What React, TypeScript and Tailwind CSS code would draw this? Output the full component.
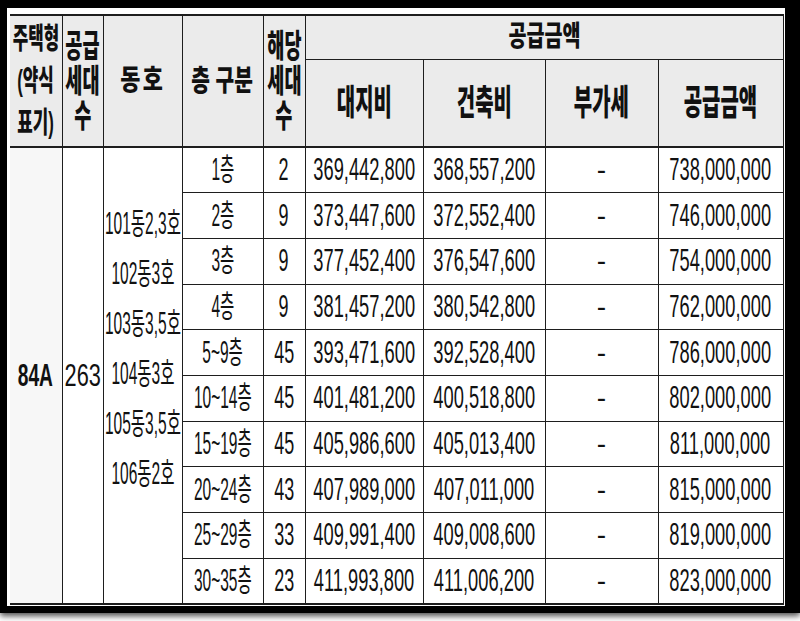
import React from "react"

const FONT = "font-['Liberation_Sans','Noto_Sans_CJK_KR',sans-serif]"

const ROWS: Array<[string, string, string, string, string]> = [
  ["1층", "2", "369,442,800", "368,557,200", "738,000,000"],
  ["2층", "9", "373,447,600", "372,552,400", "746,000,000"],
  ["3층", "9", "377,452,400", "376,547,600", "754,000,000"],
  ["4층", "9", "381,457,200", "380,542,800", "762,000,000"],
  ["5~9층", "45", "393,471,600", "392,528,400", "786,000,000"],
  ["10~14층", "45", "401,481,200", "400,518,800", "802,000,000"],
  ["15~19층", "45", "405,986,600", "405,013,400", "811,000,000"],
  ["20~24층", "43", "407,989,000", "407,011,000", "815,000,000"],
  ["25~29층", "33", "409,991,400", "409,008,600", "819,000,000"],
  ["30~35층", "23", "411,993,800", "411,006,200", "823,000,000"],
]

const DONGS = ["101동2,3호", "102동3호", "103동3,5호", "104동3호", "105동3,5호", "106동2호"]

// squeezed text, centred even when wider than the cell
function Sq({ children, className }: { children: React.ReactNode; className: string }) {
  return (
    <div className="flex justify-center">
      <span className={`inline-block whitespace-nowrap ${className}`}>{children}</span>
    </div>
  )
}

const cell = "border border-[#1e1e1e] p-0 align-middle"
const head = `${cell} bg-[#ebebeb] font-black text-[#111]`

export default function App() {
  return (
    <div className={`h-[621px] w-[800px] bg-white ${FONT}`}>
      <div className="h-[613px] bg-black pl-[7px] pt-[8px] shadow-[0_3px_6px_rgba(0,0,0,0.7)]">
        <div className="h-[598px] w-[778px] bg-white pl-[3px] pt-[6px]">
          <table className="w-[773px] table-fixed border-collapse text-[#111]">
            <colgroup>
              <col className="w-[52px]" />
              <col className="w-[41px]" />
              <col className="w-[79px]" />
              <col className="w-[81px]" />
              <col className="w-[42px]" />
              <col className="w-[118px]" />
              <col className="w-[122px]" />
              <col className="w-[113px]" />
              <col className="w-[125px]" />
            </colgroup>
            <thead>
              <tr className="h-[44px]">
                <th rowSpan={2} className={`${head} border-t-2 border-l-0`}>
                  {["주택형", "(약식", "표기)"].map((t) => (
                    <Sq key={t} className="text-[29px] leading-[42px] scale-x-[0.58]">
                      {t}
                    </Sq>
                  ))}
                </th>
                <th rowSpan={2} className={`${head} border-t-2`}>
                  {["공급", "세대", "수"].map((t) => (
                    <Sq key={t} className="text-[32px] leading-[35px] scale-x-[0.58]">
                      {t}
                    </Sq>
                  ))}
                </th>
                <th rowSpan={2} className={`${head} border-t-2`}>
                  <Sq className="text-[28px] leading-[40px] tracking-[3px] scale-x-[0.78]">동호</Sq>
                </th>
                <th rowSpan={2} className={`${head} border-t-2`}>
                  <Sq className="text-[29px] leading-[40px] scale-x-[0.7]">층 구분</Sq>
                </th>
                <th rowSpan={2} className={`${head} border-t-2`}>
                  {["해당", "세대", "수"].map((t) => (
                    <Sq key={t} className="text-[32px] leading-[35px] scale-x-[0.58]">
                      {t}
                    </Sq>
                  ))}
                </th>
                <th colSpan={4} className={`${head} border-t-2`}>
                  <Sq className="text-[28px] leading-[40px] scale-x-[0.7]">공급금액</Sq>
                </th>
              </tr>
              <tr className="h-[88px]">
                {["대지비", "건축비", "부가세", "공급금액"].map((t) => (
                  <th key={t} className={head}>
                    <Sq className="text-[35px] leading-[44px] scale-x-[0.57]">{t}</Sq>
                  </th>
                ))}
              </tr>
            </thead>
            <tbody className="border-t-2 border-[#1e1e1e]">
              {ROWS.map((r, i) => (
                <tr key={r[0]} className="h-[45.7px]">
                  {i === 0 && (
                    <>
                      <td rowSpan={10} className={`${cell} border-l-0 border-b-2 bg-[#f7f7f7]`}>
                        <Sq className="text-[32px] leading-[38px] font-bold scale-x-[0.6]">84A</Sq>
                      </td>
                      <td rowSpan={10} className={`${cell} border-b-2`}>
                        <Sq className="text-[32px] leading-[38px] scale-x-[0.68]">263</Sq>
                      </td>
                      <td rowSpan={10} className={`${cell} border-b-2 !align-top`}>
                        <div className="pt-[51px]">
                          {DONGS.map((d) => (
                            <Sq key={d} className="text-[31px] leading-[50px] scale-x-[0.5]">
                              {d}
                            </Sq>
                          ))}
                        </div>
                      </td>
                    </>
                  )}
                  <td className={`${cell} ${i === 9 ? "border-b-2" : ""}`}>
                    <Sq className="text-[31px] leading-[36px] scale-x-[0.5]">{r[0]}</Sq>
                  </td>
                  <td className={`${cell} ${i === 9 ? "border-b-2" : ""}`}>
                    <Sq className="text-[31px] leading-[36px] scale-x-[0.58]">{r[1]}</Sq>
                  </td>
                  <td className={`${cell} ${i === 9 ? "border-b-2" : ""}`}>
                    <Sq className="text-[31px] leading-[36px] scale-x-[0.59]">{r[2]}</Sq>
                  </td>
                  <td className={`${cell} ${i === 9 ? "border-b-2" : ""}`}>
                    <Sq className="text-[31px] leading-[36px] scale-x-[0.59]">{r[3]}</Sq>
                  </td>
                  <td className={`${cell} ${i === 9 ? "border-b-2" : ""}`}>
                    <Sq className="text-[28px] leading-[36px]">-</Sq>
                  </td>
                  <td className={`${cell} ${i === 9 ? "border-b-2" : ""}`}>
                    <Sq className="text-[31px] leading-[36px] scale-x-[0.59]">{r[4]}</Sq>
                  </td>
                </tr>
              ))}
            </tbody>
          </table>
        </div>
      </div>
    </div>
  )
}
